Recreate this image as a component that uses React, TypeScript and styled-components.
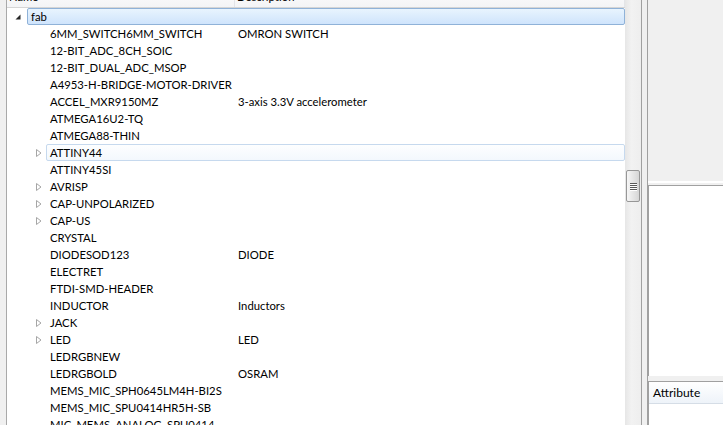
import { createGlobalStyle } from 'styled-components';
import styled from 'styled-components';

const GlobalStyle = createGlobalStyle`
  html, body {
    margin: 0;
    padding: 0;
    background: #f0f0f0;
  }
  body {
    font-family: Lato, 'Liberation Sans', Arial, sans-serif;
    font-size: 11.3px;
    color: #000;
  }
`;

type Part = { name: string; desc?: string; children?: boolean; hover?: boolean };

const parts: Part[] = [
  { name: '6MM_SWITCH6MM_SWITCH', desc: 'OMRON SWITCH' },
  { name: '12-BIT_ADC_8CH_SOIC' },
  { name: '12-BIT_DUAL_ADC_MSOP' },
  { name: 'A4953-H-BRIDGE-MOTOR-DRIVER' },
  { name: 'ACCEL_MXR9150MZ', desc: '3-axis 3.3V accelerometer' },
  { name: 'ATMEGA16U2-TQ' },
  { name: 'ATMEGA88-THIN' },
  { name: 'ATTINY44', children: true, hover: true },
  { name: 'ATTINY45SI' },
  { name: 'AVRISP', children: true },
  { name: 'CAP-UNPOLARIZED', children: true },
  { name: 'CAP-US', children: true },
  { name: 'CRYSTAL' },
  { name: 'DIODESOD123', desc: 'DIODE' },
  { name: 'ELECTRET' },
  { name: 'FTDI-SMD-HEADER' },
  { name: 'INDUCTOR', desc: 'Inductors' },
  { name: 'JACK', children: true },
  { name: 'LED', children: true, desc: 'LED' },
  { name: 'LEDRGBNEW' },
  { name: 'LEDRGBOLD', desc: 'OSRAM' },
  { name: 'MEMS_MIC_SPH0645LM4H-BI2S' },
  { name: 'MEMS_MIC_SPU0414HR5H-SB' },
  { name: 'MIC_MEMS_ANALOG_SPU0414' },
];

// x where the description column starts, measured from the tree's left edge
const DESC_X = 231;
const INDENT = 19;

const Window = styled.div`
  display: flex;
  width: 723px;
  height: 425px;
  overflow: hidden;
  background: #f0f0f0;
`;

const TreePane = styled.div`
  display: flex;
  width: 641px;
  flex-shrink: 0;
  background: #fff;
`;

const Gutter = styled.div`
  width: 6px;
  flex-shrink: 0;
  background: #f0f0f0;
  border-right: 1px solid #a9a9a9;
`;

const TreeView = styled.div`
  flex: 1;
  display: flex;
  flex-direction: column;
  overflow: hidden;
  background: #fff;
`;

const Header = styled.div`
  display: flex;
  height: 24px;
  margin-top: -17px;
  flex-shrink: 0;
  background: linear-gradient(#ffffff, #f3f4f6);
  border-bottom: 1px solid #d5d5d5;
`;

const HeaderCell = styled.div<{ $width?: number }>`
  ${(p) => (p.$width ? `width: ${p.$width}px;` : 'flex: 1;')}
  box-sizing: border-box;
  padding: 5px 0 0 2px;
  line-height: 17px;
  border-right: 1px solid #e3e5e8;
  color: #000;
`;

const Row = styled.div<{ $level: number }>`
  display: flex;
  align-items: stretch;
  height: 17px;
  padding-left: ${(p) => 4 + p.$level * INDENT}px;
  flex-shrink: 0;
`;

const Toggle = styled.div`
  width: 16px;
  flex-shrink: 0;
  display: flex;
  align-items: center;
  justify-content: center;
`;

const Label = styled.div<{ $state?: 'selected' | 'hover' }>`
  flex: 1;
  display: flex;
  align-items: center;
  box-sizing: border-box;
  padding-left: 3px;
  border: 1px solid transparent;
  border-radius: 2px;
  white-space: nowrap;
  ${(p) =>
    p.$state === 'selected' &&
    `
    background: linear-gradient(#e8f4fe, #cfe4fc);
    border-color: #8fb2d8;
  `}
  ${(p) =>
    p.$state === 'hover' &&
    `
    background: linear-gradient(#fdfeff, #f3f8fd);
    border-color: #c6d9ee;
  `}
`;

const NameCell = styled.span<{ $width: number }>`
  width: ${(p) => p.$width}px;
  flex-shrink: 0;
`;

const DescCell = styled.span`
  flex: 1;
`;

const ScrollBar = styled.div`
  width: 16px;
  flex-shrink: 0;
  position: relative;
  background: linear-gradient(90deg, #e6e6e6, #f2f2f2 40%, #eeeeee);
`;

const Thumb = styled.div`
  position: absolute;
  left: 1px;
  top: 170px;
  width: 14px;
  height: 32px;
  box-sizing: border-box;
  border: 1px solid #979797;
  border-radius: 2px;
  background: linear-gradient(90deg, #f6f6f6, #e6e6e6 50%, #d6d6d6);
  display: flex;
  flex-direction: column;
  align-items: center;
  justify-content: center;
  gap: 1px;
`;

const Grip = styled.div`
  width: 7px;
  height: 1px;
  background: #5a5a5a;
  box-shadow: 0 1px 0 #ffffff;
`;

const Splitter = styled.div`
  width: 7px;
  flex-shrink: 0;
  box-sizing: border-box;
  border-left: 1px solid #a0a0a0;
  border-right: 1px solid #a0a0a0;
  background: #f0f0f0;
`;

const SidePane = styled.div`
  flex: 1;
  display: flex;
  flex-direction: column;
  background: #f0f0f0;
`;

const Preview = styled.div`
  height: 181px;
  flex-shrink: 0;
  background: #f0f0f0;
  border-bottom: 2px solid #ffffff;
`;

const Panel = styled.div`
  height: 190px;
  flex-shrink: 0;
  margin-top: 2px;
  background: #fff;
  border-top: 1px solid #a0a0a0;
  border-left: 1px solid #a0a0a0;
`;

const AttrTable = styled.div`
  flex: 1;
  margin-top: 5px;
  background: #fff;
  border-top: 1px solid #a0a0a0;
  border-left: 1px solid #a0a0a0;
`;

const AttrHeader = styled.div`
  height: 22px;
  box-sizing: border-box;
  padding-left: 4px;
  display: flex;
  align-items: center;
  font-size: 12px;
  background: linear-gradient(#ffffff, #eef3f9);
  border-bottom: 1px solid #d5dde6;
`;

function ExpandedArrow() {
  return (
    <svg width="8" height="8" viewBox="0 0 8 8" style={{ marginLeft: -3 }}>
      <polygon points="6.5,1.5 6.5,6.5 1.5,6.5" fill="#262626" />
    </svg>
  );
}

function CollapsedArrow() {
  return (
    <svg width="8" height="10" viewBox="0 0 8 10" style={{ marginLeft: 2 }}>
      <polygon points="1.5,1.5 6,5 1.5,8.5" fill="#fff" stroke="#a6a6a6" strokeWidth="1" />
    </svg>
  );
}

function TreeRow({ level, part, state }: { level: number; part: Part; state?: 'selected' | 'hover' }) {
  const nameWidth = DESC_X - (4 + level * INDENT + 16) - 4;
  return (
    <Row $level={level}>
      <Toggle>{part.children ? level === 0 ? <ExpandedArrow /> : <CollapsedArrow /> : null}</Toggle>
      <Label $state={state}>
        <NameCell $width={nameWidth}>{part.name}</NameCell>
        {part.desc && <DescCell>{part.desc}</DescCell>}
      </Label>
    </Row>
  );
}

export default function App() {
  return (
    <>
      <GlobalStyle />
      <Window>
        <TreePane>
          <Gutter />
          <TreeView>
            <Header>
              <HeaderCell $width={228}>Name</HeaderCell>
              <HeaderCell>Description</HeaderCell>
            </Header>
            <TreeRow level={0} part={{ name: 'fab', children: true }} state="selected" />
            {parts.map((p) => (
              <TreeRow key={p.name} level={1} part={p} state={p.hover ? 'hover' : undefined} />
            ))}
          </TreeView>
          <ScrollBar>
            <Thumb>
              <Grip />
              <Grip />
              <Grip />
              <Grip />
            </Thumb>
          </ScrollBar>
        </TreePane>
        <Splitter />
        <SidePane>
          <Preview />
          <Panel />
          <AttrTable>
            <AttrHeader>Attribute</AttrHeader>
          </AttrTable>
        </SidePane>
      </Window>
    </>
  );
}
